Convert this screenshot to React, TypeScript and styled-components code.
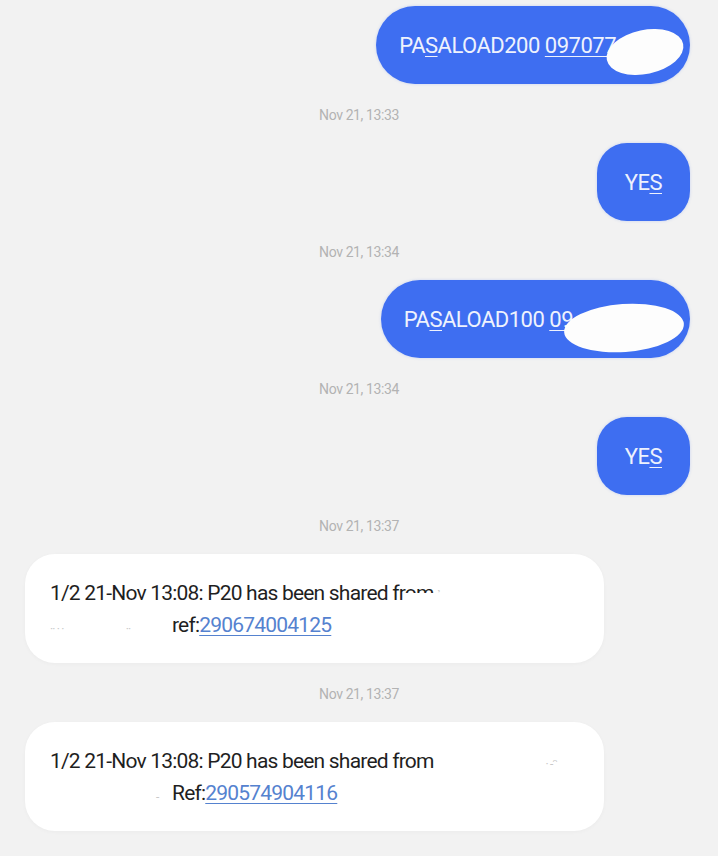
import React from "react";
import styled, { createGlobalStyle } from "styled-components";

const GlobalStyle = createGlobalStyle`
  html, body {
    margin: 0;
    padding: 0;
    background: #f2f2f2;
  }
  body {
    font-family: Roboto, "Noto Sans", Arial, sans-serif;
  }
`;

const Thread = styled.div`
  width: 718px;
  min-height: 856px;
  padding-top: 6px;
  display: flex;
  flex-direction: column;
  box-sizing: border-box;
  background: #f2f2f2;
  overflow: hidden;
`;

const Row = styled.div<{ $out?: boolean }>`
  display: flex;
  justify-content: ${({ $out }) => ($out ? "flex-end" : "flex-start")};
  padding: ${({ $out }) => ($out ? "0 28px 0 0" : "0 0 0 25px")};
`;

const Sent = styled.div<{ $compact?: boolean }>`
  position: relative;
  height: 78px;
  box-sizing: border-box;
  display: flex;
  align-items: center;
  padding: ${({ $compact }) => ($compact ? "0 28px 0 28px" : "0 6px 0 23px")};
  border-radius: ${({ $compact }) => ($compact ? "30px" : "39px")};
  background: #3e6ef1;
  color: #eef2fd;
  font-size: 22px;
  letter-spacing: -0.5px;
  box-shadow: 0 0 3px rgba(62, 110, 241, 0.25);
  white-space: nowrap;
`;

const Under = styled.span`
  text-decoration: underline;
  text-underline-offset: 3px;
  text-decoration-thickness: 1px;
`;

const Hidden = styled.span<{ $w: number }>`
  display: inline-block;
  width: ${({ $w }) => $w}px;
`;

const Blob = styled.div<{ $top: number; $right: number; $w: number; $h: number; $rot: number }>`
  position: absolute;
  top: ${({ $top }) => $top}px;
  right: ${({ $right }) => $right}px;
  width: ${({ $w }) => $w}px;
  height: ${({ $h }) => $h}px;
  background: #fdfdfd;
  border-radius: 50%;
  transform: rotate(${({ $rot }) => $rot}deg);
`;

const Stamp = styled.div`
  height: 59px;
  display: flex;
  align-items: center;
  justify-content: center;
  color: #b3b3b3;
  font-size: 14px;
  letter-spacing: -0.4px;
  padding-top: 2px;
  box-sizing: border-box;
`;

const Received = styled.div`
  width: 579px;
  box-sizing: border-box;
  padding: 23px 20px 22px 25px;
  background: #ffffff;
  border-radius: 30px;
  color: #1f1f1f;
  font-size: 21px;
  line-height: 32px;
  letter-spacing: -0.8px;
  box-shadow: 0 1px 4px rgba(0, 0, 0, 0.03);
`;

const Line = styled.div`
  white-space: nowrap;
  height: 32px;
`;

const Gutter = styled.span<{ $w: number }>`
  display: inline-block;
  width: ${({ $w }) => $w}px;
  line-height: 1;
  vertical-align: middle;
`;

const Residue = styled.span<{ $gap?: number }>`
  color: #c9c9c9;
  font-size: 12px;
  line-height: 1;
  margin-left: ${({ $gap }) => $gap ?? 0}px;
`;

const Link = styled.span`
  color: #5582cf;
  text-decoration: underline;
  text-underline-offset: 3px;
  text-decoration-thickness: 1px;
`;

const Erase = styled.span`
  position: relative;
  &::after {
    content: "";
    position: absolute;
    left: 0;
    right: -4px;
    top: 12px;
    bottom: 0;
    background: #ffffff;
  }
`;

export default function App() {
  return (
    <>
      <GlobalStyle />
      <Thread>
        <Row $out>
          <Sent>
            <span>
              PA<Under>S</Under>ALOAD200 <Under>097077</Under>
              <Hidden $w={68} />
            </span>
            <Blob $top={24} $right={6} $w={78} $h={44} $rot={-12} />
          </Sent>
        </Row>
        <Stamp>Nov 21, 13:33</Stamp>
        <Row $out>
          <Sent $compact>
            <span>
              YE<Under>S</Under>
            </span>
          </Sent>
        </Row>
        <Stamp>Nov 21, 13:34</Stamp>
        <Row $out>
          <Sent>
            <span>
              PA<Under>S</Under>ALOAD100 <Under>09</Under>
              <Hidden $w={111} />
            </span>
            <Blob $top={24} $right={6} $w={120} $h={48} $rot={-4} />
          </Sent>
        </Row>
        <Stamp>Nov 21, 13:34</Stamp>
        <Row $out>
          <Sent $compact>
            <span>
              YE<Under>S</Under>
            </span>
          </Sent>
        </Row>
        <Stamp>Nov 21, 13:37</Stamp>
        <Row>
          <Received>
            <Line>
              1/2 21-Nov 13:08: P20 has been shared fr<Erase>om</Erase>
              <Residue $gap={4}>᾿</Residue>
            </Line>
            <Line>
              <Gutter $w={122}>
                <Residue>·· · ·</Residue>
                <Residue $gap={62}>··</Residue>
              </Gutter>
              ref:<Link>290674004125</Link>
            </Line>
          </Received>
        </Row>
        <Stamp>Nov 21, 13:37</Stamp>
        <Row>
          <Received>
            <Line>
              1/2 21-Nov 13:08: P20 has been shared from
              <Residue $gap={112}>· ‐ᵔ</Residue>
            </Line>
            <Line>
              <Gutter $w={122}>
                <Residue $gap={106}>-</Residue>
              </Gutter>
              Ref:<Link>290574904116</Link>
            </Line>
          </Received>
        </Row>
      </Thread>
    </>
  );
}
